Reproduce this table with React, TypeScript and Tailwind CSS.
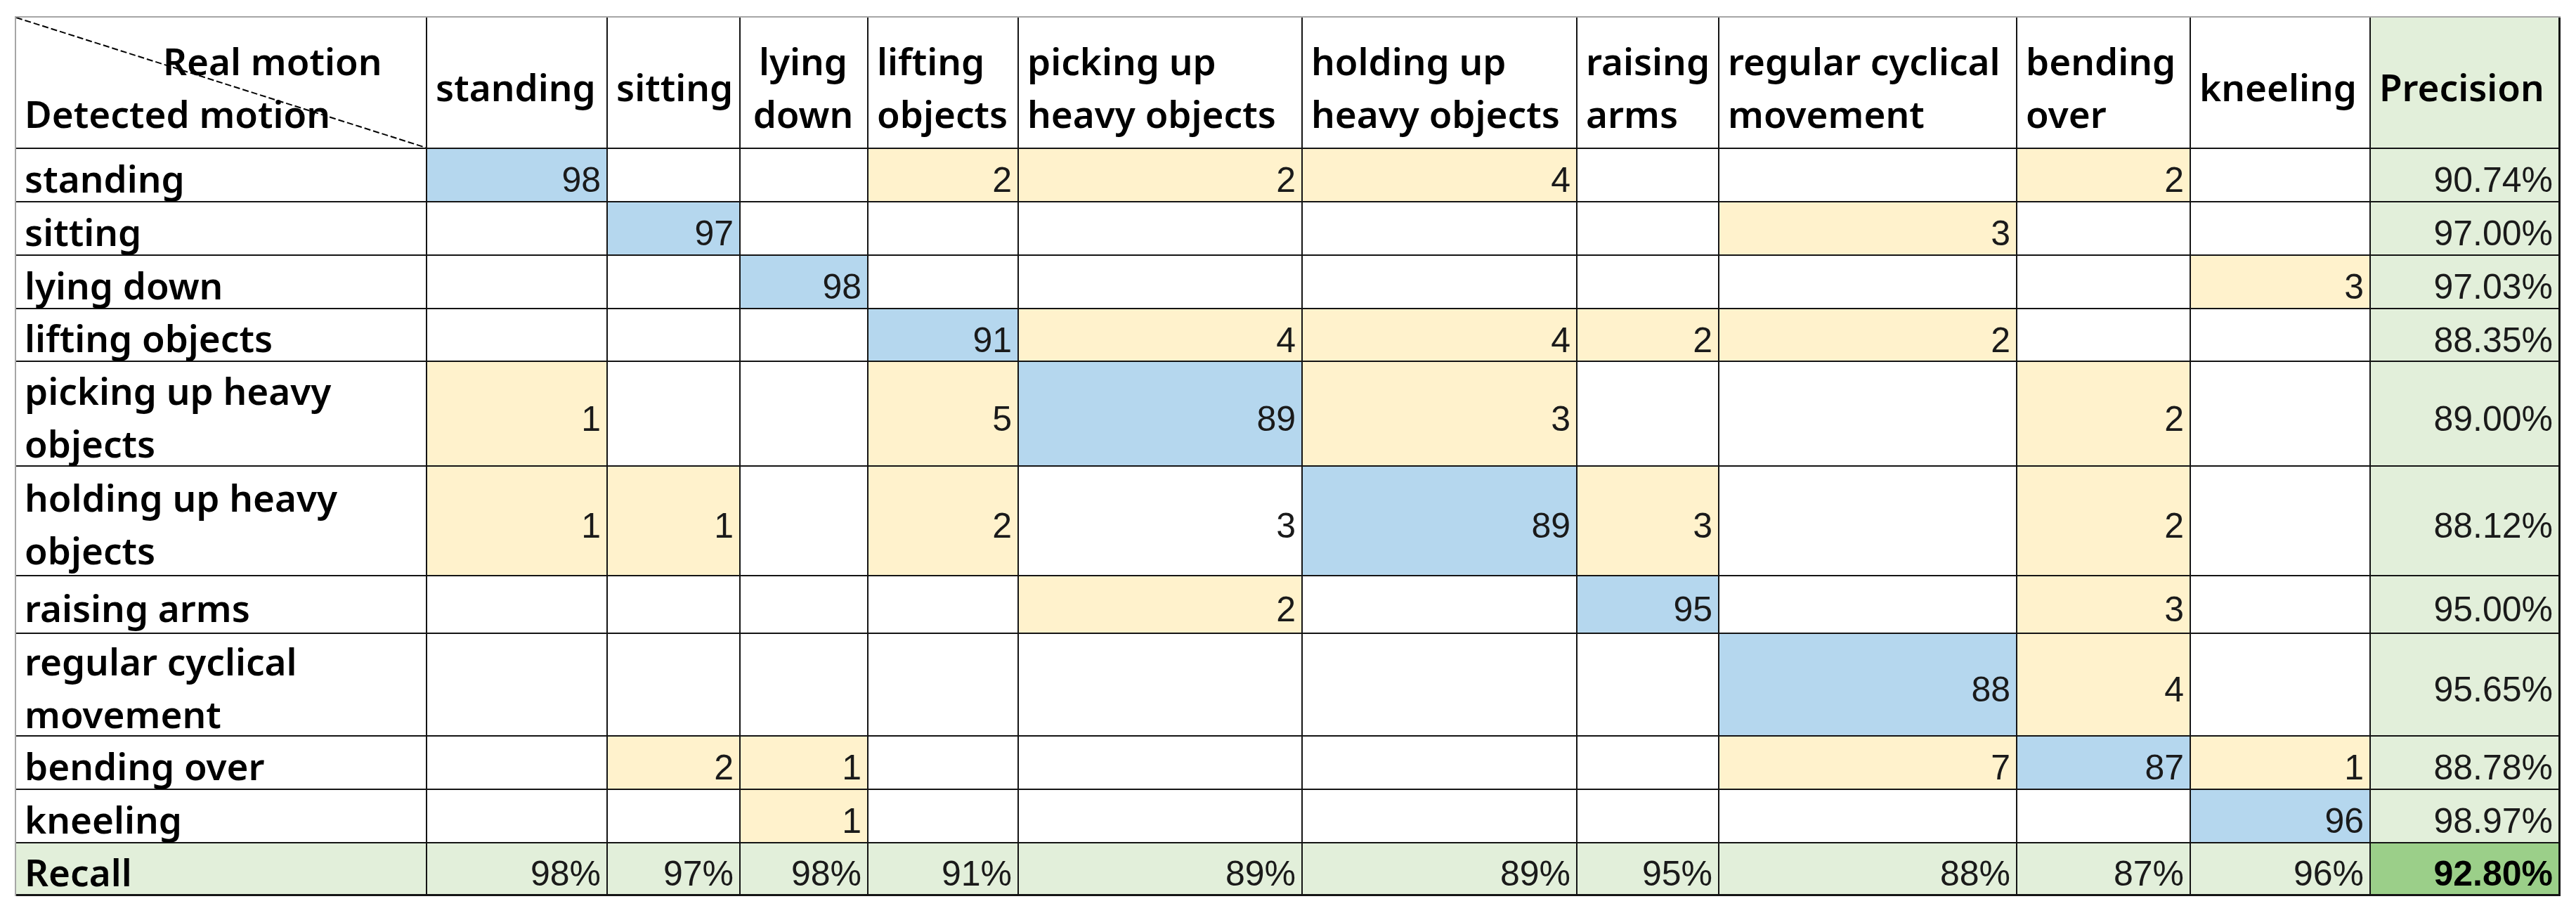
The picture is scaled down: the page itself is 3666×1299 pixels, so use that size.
import type { ReactNode } from 'react';

/** Column headers ("Real motion"), in sheet order. */
const COLS = [
  'standing',
  'sitting',
  'lying down',
  'lifting objects',
  'picking up heavy objects',
  'holding up heavy objects',
  'raising arms',
  'regular cyclical movement',
  'bending over',
  'kneeling',
];

type Tone = 'w' | 'b' | 'y' | 'g' | 'G';

/** "b:98" = value on blue, "y:2" = on yellow, plain "3" = on white, "" = empty. */
const ROWS: { label: string; cells: string[]; precision: string }[] = [
  { label: 'standing', cells: ['b:98', '', '', 'y:2', 'y:2', 'y:4', '', '', 'y:2', ''], precision: '90.74%' },
  { label: 'sitting', cells: ['', 'b:97', '', '', '', '', '', 'y:3', '', ''], precision: '97.00%' },
  { label: 'lying down', cells: ['', '', 'b:98', '', '', '', '', '', '', 'y:3'], precision: '97.03%' },
  { label: 'lifting objects', cells: ['', '', '', 'b:91', 'y:4', 'y:4', 'y:2', 'y:2', '', ''], precision: '88.35%' },
  { label: 'picking up heavy objects', cells: ['y:1', '', '', 'y:5', 'b:89', 'y:3', '', '', 'y:2', ''], precision: '89.00%' },
  { label: 'holding up heavy objects', cells: ['y:1', 'y:1', '', 'y:2', '3', 'b:89', 'y:3', '', 'y:2', ''], precision: '88.12%' },
  { label: 'raising arms', cells: ['', '', '', '', 'y:2', '', 'b:95', '', 'y:3', ''], precision: '95.00%' },
  { label: 'regular cyclical movement', cells: ['', '', '', '', '', '', '', 'b:88', 'y:4', ''], precision: '95.65%' },
  { label: 'bending over', cells: ['', 'y:2', 'y:1', '', '', '', '', 'y:7', 'b:87', 'y:1'], precision: '88.78%' },
  { label: 'kneeling', cells: ['', '', 'y:1', '', '', '', '', '', '', 'b:96'], precision: '98.97%' },
];

const RECALL = ['98%', '97%', '98%', '91%', '89%', '89%', '95%', '88%', '87%', '96%'];

const BG: Record<Tone, string> = {
  w: 'bg-white',
  b: 'bg-[#b5d7ee]',
  y: 'bg-[#fff2cc]',
  g: 'bg-[#e2efda]',
  G: 'bg-[#9bcf89]',
};

function parse(raw: string): { value: string; tone: Tone } {
  if (raw.startsWith('b:')) return { value: raw.slice(2), tone: 'b' };
  if (raw.startsWith('y:')) return { value: raw.slice(2), tone: 'y' };
  return { value: raw, tone: 'w' };
}

function Cell({
  tone = 'w',
  lastCol = false,
  lastRow = false,
  className = '',
  children,
}: {
  tone?: Tone;
  lastCol?: boolean;
  lastRow?: boolean;
  className?: string;
  children?: ReactNode;
}) {
  return (
    <div
      className={[
        'relative flex flex-col justify-center border-[#141414]',
        lastCol ? 'border-r-[3px]' : 'border-r-2',
        lastRow ? 'border-b-[3px]' : 'border-b-2',
        BG[tone],
        className,
      ].join(' ')}
    >
      {children}
    </div>
  );
}

const LABEL = "pl-[12px] pt-[8px] font-['Noto_Sans',sans-serif] text-[53px] font-semibold leading-[75px] text-black";
const HEAD = "pl-[12px] pr-[2px] pt-[12px] font-['Noto_Sans',sans-serif] text-[53px] font-semibold leading-[75px] text-black";
const NUM = "items-end pr-[8px] pt-[14px] font-['Liberation_Sans',Arial,sans-serif] text-[50px] leading-[62px] text-[#1a1a1a]";

export default function App() {
  return (
    <div className="h-[1299px] w-[3666px] bg-white pl-[21px] pt-[23px]">
      <div className="grid w-max grid-cols-[585px_257px_189px_182px_214px_404px_391px_202px_424px_247px_256px_270px] grid-rows-[187px_76px_76px_76px_75px_149px_156px_82px_146px_76px_76px_75px] border-l-2 border-t-2 border-[#a6a6a6]">
        {/* corner header with the dashed diagonal */}
        <Cell className="pt-[12px] font-['Noto_Sans',sans-serif] text-[53px] font-semibold leading-[75px] text-black">
          <svg className="absolute inset-0 h-full w-full" viewBox="0 0 100 100" preserveAspectRatio="none">
            <line
              x1="0"
              y1="0"
              x2="100"
              y2="100"
              stroke="#000"
              strokeWidth="2"
              strokeDasharray="9 4"
              vectorEffect="non-scaling-stroke"
            />
          </svg>
          <div className="pl-[209px]">Real motion</div>
          <div className="pl-[12px]">Detected motion</div>
        </Cell>
        {COLS.map((c) => (
          <Cell key={c} className={c === 'lying down' ? `${HEAD} items-center !pl-0 text-center` : HEAD}>
            <div>{c}</div>
          </Cell>
        ))}
        <Cell tone="g" lastCol className={HEAD}>
          <div>Precision</div>
        </Cell>

        {ROWS.map((r) => (
          <Row key={r.label} label={r.label} cells={r.cells} precision={r.precision} />
        ))}

        <Cell tone="g" lastRow className={LABEL}>
          <div>Recall</div>
        </Cell>
        {RECALL.map((v, i) => (
          <Cell key={i} tone="g" lastRow className={NUM}>
            <div>{v}</div>
          </Cell>
        ))}
        <Cell tone="G" lastRow lastCol className={`${NUM} font-bold text-black`}>
          <div>92.80%</div>
        </Cell>
      </div>
    </div>
  );
}

function Row({ label, cells, precision }: { label: string; cells: string[]; precision: string }) {
  return (
    <>
      <Cell className={LABEL}>
        <div>{label}</div>
      </Cell>
      {cells.map((raw, i) => {
        const { value, tone } = parse(raw);
        return (
          <Cell key={i} tone={tone} className={NUM}>
            {value && <div>{value}</div>}
          </Cell>
        );
      })}
      <Cell tone="g" lastCol className={NUM}>
        <div>{precision}</div>
      </Cell>
    </>
  );
}
